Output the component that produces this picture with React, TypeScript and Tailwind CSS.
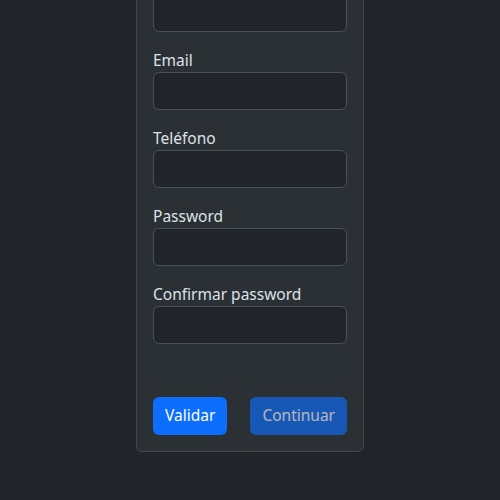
const fields = ["Email", "Teléfono", "Password", "Confirmar password"]

export default function App() {
    return (
        <div
            className="min-h-screen w-full bg-[#212529] flex justify-center overflow-hidden text-[#dee2e6]"
            style={{ fontFamily: '"Noto Sans", "Open Sans", sans-serif' }}
        >
            <div className="mt-[-23px] mb-[48px] w-[228px] self-start rounded-[6px] border border-[#43484d] bg-[#2b3035] p-4 flex flex-col">
                <div className="mb-4">
                    <input
                        type="text"
                        className="h-[38px] w-full rounded-[6px] border border-[#495057] bg-[#212529] px-3 text-[16px] outline-none"
                    />
                </div>
                {fields.map((label) => (
                    <div key={label} className="mb-4 flex flex-col">
                        <label className="text-[15.5px] leading-6">{label}</label>
                        <input
                            type={label.includes("assword") ? "password" : "text"}
                            className="h-[38px] w-full rounded-[6px] border border-[#495057] bg-[#212529] px-3 text-[16px] outline-none"
                        />
                    </div>
                ))}
                <div className="mt-[37px] flex justify-between">
                    <button className="h-[38px] rounded-[6px] bg-[#0d6efd] px-3 text-[15.5px] text-white">
                        Validar
                    </button>
                    <button
                        disabled
                        className="h-[38px] rounded-[6px] bg-[#0d6efd] px-3 text-[15.5px] text-white opacity-65"
                    >
                        Continuar
                    </button>
                </div>
            </div>
        </div>
    )
}
